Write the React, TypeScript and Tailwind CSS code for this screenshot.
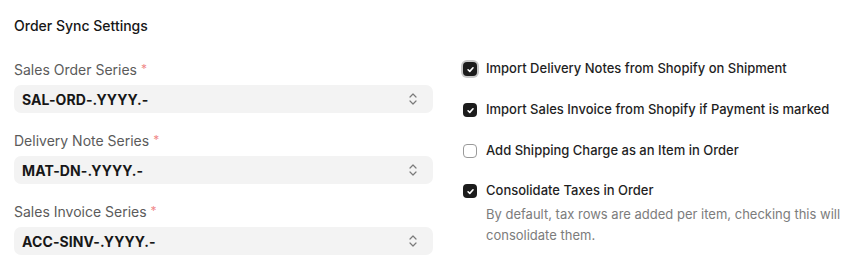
import React from "react";

function Chevrons() {
  return (
    <svg width="12" height="14" viewBox="0 0 12 14" fill="none" stroke="#7a7a7a" strokeWidth="1.2" strokeLinecap="round" strokeLinejoin="round">
      <path d="M3 5l3-3 3 3" />
      <path d="M3 9l3 3 3-3" />
    </svg>
  );
}

function Field({ label, value }: { label: string; value: string }) {
  return (
    <div className="flex flex-col">
      <div className="h-5 flex items-center text-[14px] text-[#5b5b5b]">
        {label}
        <span className="ml-1 text-[#f08a8a] text-[12px]">*</span>
      </div>
      <div className="mt-[6px] h-7 rounded-[7px] bg-[#f3f3f3] flex items-center justify-between pl-2 pr-[14px]">
        <span className="text-[14px] font-bold text-[#171717] tracking-[0.1px]">{value}</span>
        <Chevrons />
      </div>
    </div>
  );
}

function Check({ checked, focus }: { checked: boolean; focus?: boolean }) {
  if (!checked)
    return <div className="w-[14px] h-[14px] rounded-[4px] border border-[#9a9a9a] bg-white shrink-0" />;
  return (
    <div
      className={
        "w-[14px] h-[14px] rounded-[4px] bg-[#1c1c1c] flex items-center justify-center shrink-0" +
        (focus ? " ring-2 ring-[#c8c8c8] ring-offset-0" : "")
      }
    >
      <svg width="9" height="9" viewBox="0 0 10 10" fill="none" stroke="white" strokeWidth="1.8" strokeLinecap="round" strokeLinejoin="round">
        <path d="M2.3 5.3l1.9 1.8 3.6-4" />
      </svg>
    </div>
  );
}

function CheckRow({ checked, focus, label }: { checked: boolean; focus?: boolean; label: string }) {
  return (
    <div className="flex items-center gap-[9px] h-5">
      <Check checked={checked} focus={focus} />
      <span className="text-[13px] font-medium text-[#1f1f1f]">{label}</span>
    </div>
  );
}

export default function App() {
  return (
    <div className="w-[852px] h-[269px] bg-white pl-[14px] pt-[15px] overflow-hidden" style={{ fontFamily: "Inter, 'Noto Sans', sans-serif" }}>
      <div className="h-5 flex items-center text-[14px] font-medium text-[#171717]">Order Sync Settings</div>
      <div className="mt-6 flex gap-[30px]">
        <div className="w-[419px] flex flex-col gap-[17px]">
          <Field label="Sales Order Series" value="SAL-ORD-.YYYY.-" />
          <Field label="Delivery Note Series" value="MAT-DN-.YYYY.-" />
          <Field label="Sales Invoice Series" value="ACC-SINV-.YYYY.-" />
        </div>
        <div className="flex flex-col">
          <CheckRow checked focus label="Import Delivery Notes from Shopify on Shipment" />
          <div className="mt-[21px]">
            <CheckRow checked label="Import Sales Invoice from Shopify if Payment is marked" />
          </div>
          <div className="mt-[21px]">
            <CheckRow checked={false} label="Add Shipping Charge as an Item in Order" />
          </div>
          <div className="mt-[20px]">
            <CheckRow checked label="Consolidate Taxes in Order" />
            <div className="ml-[23px] mt-[3px] text-[13px] leading-[21px] text-[#7c7c7c] w-[360px]">
              By default, tax rows are added per item, checking this will consolidate them.
            </div>
          </div>
        </div>
      </div>
    </div>
  );
}
